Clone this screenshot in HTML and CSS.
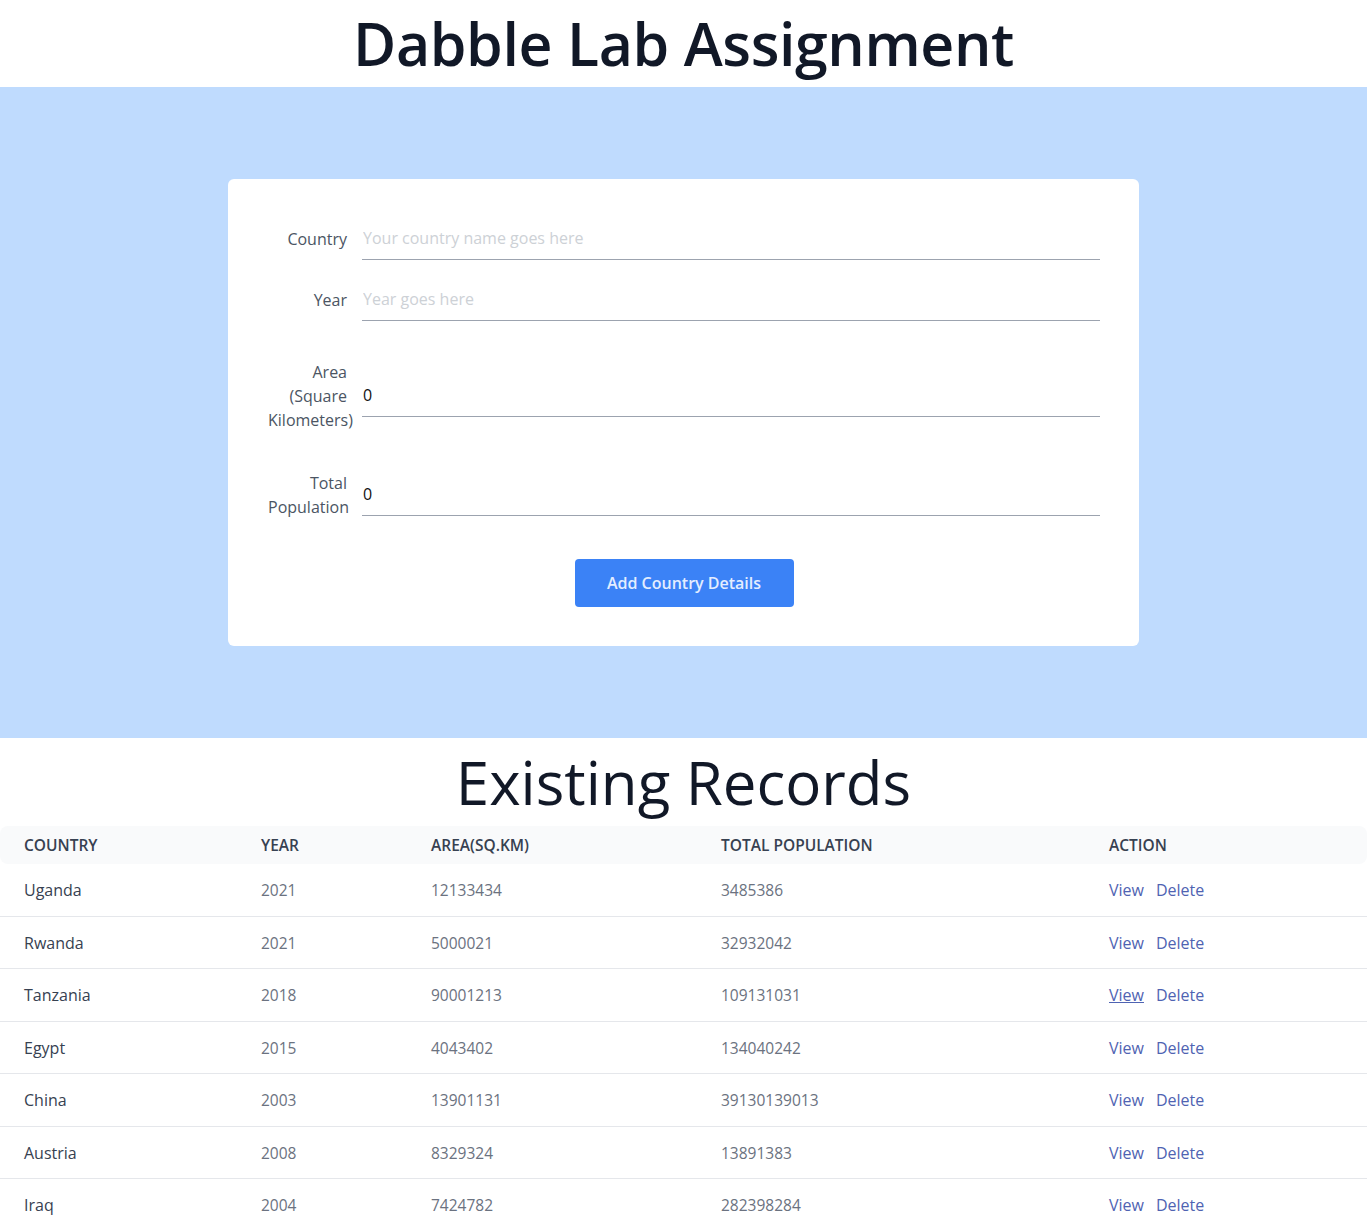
FILE: index.html
```html
<!DOCTYPE html>
<html lang="en">
<head>
<meta charset="utf-8">
<title>Dabble Lab Assignment</title>
<link rel="stylesheet" href="styles.css">
</head>
<body>
  <header class="top">
    <h1 class="title">Dabble Lab Assignment</h1>
  </header>
  <section class="band">
    <form class="card">
      <div class="row">
        <label class="label" for="country">Country</label>
        <input class="field" id="country" type="text" placeholder="Your country name goes here">
      </div>
      <div class="row row-year">
        <label class="label" for="year">Year</label>
        <input class="field" id="year" type="text" placeholder="Year goes here">
      </div>
      <div class="row row-wide">
        <label class="label" for="area">Area (Square Kilometers)</label>
        <input class="field" id="area" type="text" value="0">
      </div>
      <div class="row row-wide">
        <label class="label" for="pop">Total Population</label>
        <input class="field" id="pop" type="text" value="0">
      </div>
      <div class="actions">
        <button class="btn" type="button">Add Country Details</button>
      </div>
    </form>
  </section>
  <section class="records">
    <h2 class="subtitle">Existing Records</h2>
    <table class="table">
      <colgroup>
        <col class="c1"><col class="c2"><col class="c3"><col class="c4"><col class="c5">
      </colgroup>
      <thead>
        <tr><th>Country</th><th>Year</th><th>Area(sq.km)</th><th>Total Population</th><th>Action</th></tr>
      </thead>
      <tbody>
        <tr><td class="name">Uganda</td><td>2021</td><td>12133434</td><td>3485386</td><td><a class="link" href="#">View</a><a class="link" href="#">Delete</a></td></tr>
        <tr><td class="name">Rwanda</td><td>2021</td><td>5000021</td><td>32932042</td><td><a class="link" href="#">View</a><a class="link" href="#">Delete</a></td></tr>
        <tr><td class="name">Tanzania</td><td>2018</td><td>90001213</td><td>109131031</td><td><a class="link hover" href="#">View</a><a class="link" href="#">Delete</a></td></tr>
        <tr><td class="name">Egypt</td><td>2015</td><td>4043402</td><td>134040242</td><td><a class="link" href="#">View</a><a class="link" href="#">Delete</a></td></tr>
        <tr><td class="name">China</td><td>2003</td><td>13901131</td><td>39130139013</td><td><a class="link" href="#">View</a><a class="link" href="#">Delete</a></td></tr>
        <tr><td class="name">Austria</td><td>2008</td><td>8329324</td><td>13891383</td><td><a class="link" href="#">View</a><a class="link" href="#">Delete</a></td></tr>
        <tr><td class="name">Iraq</td><td>2004</td><td>7424782</td><td>282398284</td><td><a class="link" href="#">View</a><a class="link" href="#">Delete</a></td></tr>
      </tbody>
    </table>
  </section>
</body>
</html>
```
FILE: styles.css
```css
* { box-sizing: border-box; }
html, body { margin: 0; padding: 0; }
body {
  font-family: "Open Sans", "Noto Sans", sans-serif;
  color: #111827;
  background: #fff;
}
.top {
  height: 87px;
  display: flex;
  align-items: center;
  justify-content: center;
}
.title {
  margin: 0;
  font-size: 59px;
  font-weight: 600;
  line-height: 1;
  letter-spacing: -0.4px;
  color: #111827;
}
.band {
  background: #bfdbfe;
  padding: 92px 0;
}
.card {
  width: 911px;
  margin: 0 auto;
  background: #fff;
  border-radius: 6px;
  padding: 39px 39px 39px 40px;
}
.row {
  display: flex;
  align-items: center;
  gap: 15px;
}
.row-year { margin-top: 19px; }
.row-wide { margin-top: 39px; }
.label {
  flex: 0 0 79px;
  width: 79px;
  text-align: right;
  font-size: 16px;
  line-height: 24px;
  color: #4b5563;
}
.field {
  flex: 1;
  min-width: 0;
  border: 0;
  border-bottom: 1px solid #9ca3af;
  padding: 8px 0 9px 1px;
  font-family: inherit;
  font-size: 16px;
  line-height: 24px;
  height: 42px;
  color: #111;
  background: transparent;
  outline: none;
}
.field::placeholder { color: #cdd1d6; }
.actions {
  display: flex;
  justify-content: center;
  margin-top: 40px;
}
.btn {
  width: 219px;
  height: 48px;
  border: 0;
  border-radius: 4px;
  background: #3b82f6;
  color: #e3edff;
  font-family: inherit;
  font-size: 16px;
  font-weight: 600;
  letter-spacing: 0;
}
.subtitle {
  margin: 0;
  height: 88px;
  display: flex;
  align-items: center;
  justify-content: center;
  font-size: 60px;
  font-weight: 400;
  line-height: 1;
  color: #111827;
}
.table {
  width: 100%;
  border-collapse: separate;
  border-spacing: 0;
  table-layout: fixed;
  font-size: 15.5px;
}
.c1 { width: 237px; }
.c2 { width: 170px; }
.c3 { width: 290px; }
.c4 { width: 388px; }
.c5 { width: auto; }
th {
  background: #f9fafb;
  text-align: left;
  text-transform: uppercase;
  font-weight: 600;
  color: #374151;
  padding: 7px 24px;
  line-height: 24px;
  font-size: 15.5px;
}
th:first-child { border-radius: 8px 0 0 8px; }
th:last-child { border-radius: 0 8px 8px 0; }
td {
  padding: 14px 24px 13.5px;
  line-height: 24px;
  color: #6b7280;
  border-bottom: 1px solid #e5e7eb;
  white-space: nowrap;
}
td.name { color: #374151; font-size: 16px; }
.link {
  color: #4f63b2;
  text-decoration: none;
  margin-right: 12px;
  font-size: 16px;
}
.link.hover { text-decoration: underline; }
```
